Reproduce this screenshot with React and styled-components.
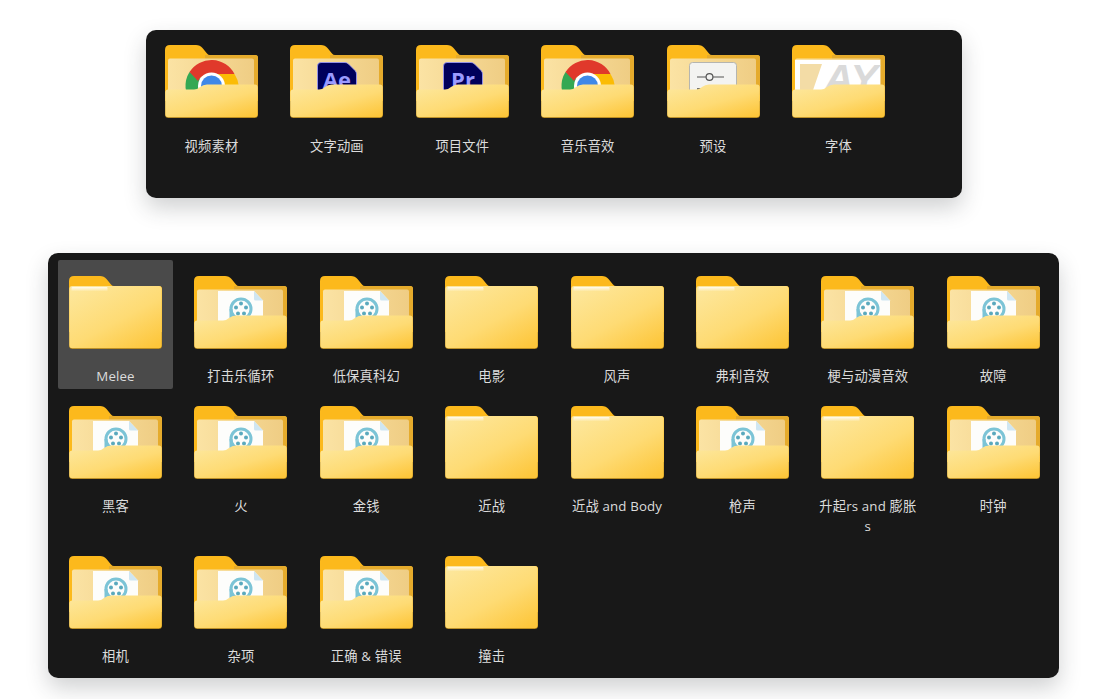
import { useId } from "react";
import styled, { createGlobalStyle } from "styled-components";

const GlobalStyle = createGlobalStyle`
  body {
    margin: 0;
    background: #fff;
    font-family: "Open Sans", "Noto Sans CJK SC", sans-serif;
  }
`;

const Page = styled.div`
  display: flex;
  flex-direction: column;
  gap: 55px;
  padding-top: 30px;
  height: 669px;
  overflow: hidden;
`;

const Panel = styled.div`
  display: grid;
  grid-template-columns: repeat(${(p) => p.$columns}, 115px);
  align-content: start;
  column-gap: 10.4px;
  row-gap: 1px;
  box-sizing: border-box;
  background: #181818;
  border-radius: 10px;
  box-shadow: 0 10px 22px rgba(40, 45, 50, 0.22);
`;

const TopPanel = styled(Panel)`
  width: 816px;
  height: 168px;
  margin-left: 146px;
  padding: 0 8px;
`;

const BottomPanel = styled(Panel)`
  width: 1011px;
  height: 425px;
  margin-left: 48px;
  padding: 7px 10px 9px;
`;

const Tile = styled.div`
  display: flex;
  flex-direction: column;
  align-items: center;
  padding: ${(p) => p.$top}px 0 3px;
  border-radius: 2px;
  background: ${(p) => (p.$selected ? "#4a4a4a" : "transparent")};
`;

const Label = styled.div`
  width: 102px;
  margin-top: ${(p) => p.$gap}px;
  font-size: 13.3px;
  letter-spacing: 0.15px;
  line-height: 20px;
  color: #dcdcdc;
  text-align: center;
  word-break: break-all;
`;

const FolderSvg = styled.svg`
  display: block;
  flex: none;
  width: 93px;
  height: 73px;
`;

const BACK_PATH =
  "M0 5Q0 0 5 0H31Q35 0 37.5 3L42 8.5Q43.2 10 45 10H90Q93 10 93 13V62H0Z";
const FRONT_PATH =
  "M0.3 47.5Q0.3 44.5 3.3 44.5H29Q32 44.5 35 42Q38 39.5 42 39.5H89.7Q92.7 39.5 92.7 42.5V69Q92.7 72.2 89.7 72.2H3.3Q0.3 72.2 0.3 69Z";
const PLAIN_FRONT_PATH =
  "M0.3 13Q0.3 10 3.3 10H89.7Q92.7 10 92.7 13V69Q92.7 72.2 89.7 72.2H3.3Q0.3 72.2 0.3 69Z";
const EDGE_PATH = "M0 56H93V69.5Q93 73 89.5 73H3.5Q0 73 0 69.5Z";

function ChromeArt() {
  return (
    <g>
      <path d="M46.5 41L24.5 27A26 26 0 0 0 27 58Z" fill="#34a853" />
      <path d="M24.5 27A26 26 0 0 1 69.5 29L46.5 29Q36 29 33 36Z" fill="#e0392b" />
      <path d="M69.5 29A26 26 0 0 1 72 52L57 44Q58 34 46.5 29Z" fill="#fbbc05" />
      <circle cx="46.5" cy="41" r="13.5" fill="#fff" />
      <circle cx="46.5" cy="41" r="10.5" fill="#3f88e8" />
    </g>
  );
}

function AdobeArt({ name }) {
  return (
    <g>
      <path
        d="M31 17.5H55Q57 17.5 58.5 19L65 25.5Q66.5 27 66.5 29V50H27.5V21Q27.5 17.5 31 17.5Z"
        fill="#00005b"
        stroke="#9a9aff"
        strokeWidth="0.8"
      />
      <text
        x="47"
        y="43"
        textAnchor="middle"
        fontFamily="'Open Sans', sans-serif"
        fontWeight="700"
        fontSize="22"
        fill="#9a9aff"
      >
        {name}
      </text>
    </g>
  );
}

function SlidersArt() {
  return (
    <g>
      <rect x="22.5" y="17.5" width="47" height="34" rx="3" fill="#f3f3f1" stroke="#b5b5b0" />
      <path d="M30 32H39M46 32H57" stroke="#555" strokeWidth="1.2" />
      <circle cx="42.5" cy="32" r="3.4" fill="none" stroke="#555" strokeWidth="1.2" />
      <path d="M30 44H35" stroke="#555" strokeWidth="1.6" />
      <circle cx="49" cy="44" r="3.2" fill="none" stroke="#555" strokeWidth="1.2" />
    </g>
  );
}

function FontArt() {
  return (
    <g>
      <rect x="3" y="15" width="85" height="33" fill="#fff" />
      <path d="M8 19H30L20 48H8Z" fill="#f3dca6" />
      <text
        x="32"
        y="47"
        fontFamily="'Liberation Sans', sans-serif"
        fontWeight="700"
        fontStyle="italic"
        fontSize="38"
        textLength="54"
        lengthAdjust="spacingAndGlyphs"
        fill="#dadada"
      >
        AY
      </text>
    </g>
  );
}

function FilmArt() {
  return (
    <g>
      <path d="M24 15H60L69 24.5V50H24Z" fill="#fdfdfb" />
      <path d="M60 15L69 24.5H61.5Q60 24.5 60 23Z" fill="#cfe6f2" />
      <circle cx="47" cy="33" r="10" fill="none" stroke="#7cc4d6" strokeWidth="3" />
      <path d="M37 33V46H47" fill="none" stroke="#7cc4d6" strokeWidth="3" />
      <circle cx="47" cy="27.5" r="2" fill="#5aa9bd" />
      <circle cx="52" cy="31.5" r="2" fill="#5aa9bd" />
      <circle cx="50" cy="37.5" r="2" fill="#5aa9bd" />
      <circle cx="44" cy="37.5" r="2" fill="#5aa9bd" />
      <circle cx="42" cy="31.5" r="2" fill="#5aa9bd" />
    </g>
  );
}

const ART = {
  chrome: <ChromeArt />,
  ae: <AdobeArt name="Ae" />,
  pr: <AdobeArt name="Pr" />,
  sliders: <SlidersArt />,
  font: <FontArt />,
  film: <FilmArt />,
};

function Folder({ art }) {
  const id = useId().replace(/[^a-zA-Z0-9]/g, "");
  return (
    <FolderSvg viewBox="0 0 93 73" aria-hidden="true">
      <defs>
        <linearGradient id={`${id}front`} x1="0.1" y1="0" x2="0.9" y2="1">
          <stop offset="0" stopColor="#fde79c" />
          <stop offset="0.55" stopColor="#fedb74" />
          <stop offset="1" stopColor="#fdc63a" />
        </linearGradient>
        <linearGradient id={`${id}inside`} x1="0" y1="0" x2="1" y2="0">
          <stop offset="0" stopColor="#fbe3a4" />
          <stop offset="1" stopColor="#efcd84" />
        </linearGradient>
        <linearGradient id={`${id}shine`} x1="0" y1="0" x2="0" y2="1">
          <stop offset="0" stopColor="#fff" stopOpacity="0.85" />
          <stop offset="1" stopColor="#fff" stopOpacity="0" />
        </linearGradient>
      </defs>
      <path d={BACK_PATH} fill="#fcb91c" />
      {art ? (
        <>
          <path d="M40 10H90Q93 10 93 13V50H40Z" fill="#e5ab2c" />
          <rect x="3" y="13.5" width="86" height="36" rx="2" fill={`url(#${id}inside)`} />
          {ART[art]}
        </>
      ) : null}
      <path d={EDGE_PATH} fill="#a87b16" />
      <path d={art ? FRONT_PATH : PLAIN_FRONT_PATH} fill={`url(#${id}front)`} />
      {art ? null : (
        <rect x="2.5" y="11" width="36" height="4.5" rx="1" fill={`url(#${id}shine)`} />
      )}
    </FolderSvg>
  );
}

const topFolders = [
  { name: "视频素材", art: "chrome" },
  { name: "文字动画", art: "ae" },
  { name: "项目文件", art: "pr" },
  { name: "音乐音效", art: "chrome" },
  { name: "预设", art: "sliders" },
  { name: "字体", art: "font" },
];

const bottomFolders = [
  { name: "Melee", selected: true },
  { name: "打击乐循环", art: "film" },
  { name: "低保真科幻", art: "film" },
  { name: "电影" },
  { name: "风声" },
  { name: "弗利音效" },
  { name: "梗与动漫音效", art: "film" },
  { name: "故障", art: "film" },
  { name: "黑客", art: "film" },
  { name: "火", art: "film" },
  { name: "金钱", art: "film" },
  { name: "近战" },
  { name: "近战 and Body" },
  { name: "枪声", art: "film" },
  { name: "升起rs and 膨胀s" },
  { name: "时钟", art: "film" },
  { name: "相机", art: "film" },
  { name: "杂项", art: "film" },
  { name: "正确 & 错误", art: "film" },
  { name: "撞击" },
];

export default function App() {
  return (
    <>
      <GlobalStyle />
      <Page>
        <TopPanel $columns={6}>
          {topFolders.map((f) => (
            <Tile key={f.name} $top={15}>
              <Folder art={f.art} />
              <Label $gap={18}>{f.name}</Label>
            </Tile>
          ))}
        </TopPanel>
        <BottomPanel $columns={8}>
          {bottomFolders.map((f) => (
            <Tile key={f.name} $top={16} $selected={f.selected}>
              <Folder art={f.art} />
              <Label $gap={17}>{f.name}</Label>
            </Tile>
          ))}
        </BottomPanel>
      </Page>
    </>
  );
}
